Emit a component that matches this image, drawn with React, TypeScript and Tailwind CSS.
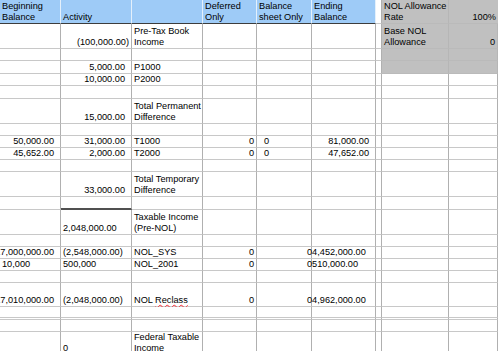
import React from 'react';

type Align = 'l' | 'r' | 'rn' | 'li' | 'ov';
type Cell = { t?: React.ReactNode; a?: Align };
type Row = { h: string; cells: Cell[]; sumTop?: boolean };

const GRID = 'grid grid-cols-[61px_71px_71px_54px_55px_64px_6px_67px_49px]';

const alignClass: Record<Align, string> = {
  l: 'justify-start pl-[2px]',
  li: 'justify-start pl-[7px]',
  r: 'justify-end pr-[6px]',
  rn: 'justify-end pr-[2px]',
  ov: 'justify-start',
};

const two = (a: string, b: string) => (
  <span className="flex flex-col">
    <span>{a}</span>
    <span>{b}</span>
  </span>
);

const E: Cell = {};

const rows: Row[] = [
  {
    h: 'h-[25px]',
    cells: [
      E,
      { t: '(100,000.00)', a: 'rn' },
      { t: two('Pre-Tax Book', 'Income'), a: 'l' },
      E, E, E, E,
      { t: two('Base NOL', 'Allowance'), a: 'l' },
      { t: '0', a: 'rn' },
    ],
  },
  { h: 'h-[12px]', cells: [] },
  { h: 'h-[13px]', cells: [E, { t: '5,000.00', a: 'r' }, { t: 'P1000', a: 'l' }] },
  { h: 'h-[12px]', cells: [E, { t: '10,000.00', a: 'r' }, { t: 'P2000', a: 'l' }] },
  { h: 'h-[13px]', cells: [] },
  {
    h: 'h-[25px]',
    cells: [E, { t: '15,000.00', a: 'r' }, { t: two('Total Permanent', 'Difference'), a: 'l' }],
  },
  { h: 'h-[12px]', cells: [] },
  {
    h: 'h-[12px]',
    cells: [
      { t: '50,000.00', a: 'r' },
      { t: '31,000.00', a: 'r' },
      { t: 'T1000', a: 'l' },
      { t: '0', a: 'rn' },
      { t: '0', a: 'li' },
      { t: '81,000.00', a: 'r' },
    ],
  },
  {
    h: 'h-[12px]',
    cells: [
      { t: '45,652.00', a: 'r' },
      { t: '2,000.00', a: 'r' },
      { t: 'T2000', a: 'l' },
      { t: '0', a: 'rn' },
      { t: '0', a: 'li' },
      { t: '47,652.00', a: 'r' },
    ],
  },
  { h: 'h-[12px]', cells: [] },
  {
    h: 'h-[25px]',
    cells: [E, { t: '33,000.00', a: 'r' }, { t: two('Total Temporary', 'Difference'), a: 'l' }],
  },
  { h: 'h-[13px]', cells: [], sumTop: true },
  {
    h: 'h-[25px]',
    cells: [E, { t: '2,048,000.00', a: 'l' }, { t: two('Taxable Income', '(Pre-NOL)'), a: 'l' }],
  },
  { h: 'h-[12px]', cells: [] },
  {
    h: 'h-[12px]',
    cells: [
      { t: '17,000,000.00', a: 'r' },
      { t: '(2,548,000.00)', a: 'l' },
      { t: 'NOL_SYS', a: 'l' },
      { t: '0', a: 'rn' },
      E,
      { t: <span className="-ml-[5px]">04,452,000.00</span>, a: 'ov' },
    ],
  },
  {
    h: 'h-[12px]',
    cells: [
      { t: '10,000', a: 'l' },
      { t: '500,000', a: 'l' },
      { t: 'NOL_2001', a: 'l' },
      { t: '0', a: 'rn' },
      E,
      { t: <span className="-ml-[5px]">0510,000.00</span>, a: 'ov' },
    ],
  },
  { h: 'h-[12px]', cells: [] },
  {
    h: 'h-[24px]',
    cells: [
      { t: '17,010,000.00', a: 'r' },
      { t: '(2,048,000.00)', a: 'l' },
      {
        t: (
          <span>
            NOL <span className="underline decoration-wavy decoration-red-500 decoration-1">Reclass</span>
          </span>
        ),
        a: 'l',
      },
      { t: '0', a: 'rn' },
      E,
      { t: <span className="-ml-[5px]">04,962,000.00</span>, a: 'ov' },
    ],
  },
  { h: 'h-[11px]', cells: [] },
  { h: 'h-[2px]', cells: [] },
  { h: 'h-[12px]', cells: [] },
  {
    h: 'h-[23px]',
    cells: [E, { t: '0', a: 'l' }, { t: two('Federal Taxable', 'Income'), a: 'l' }],
  },
];

function HeaderRow() {
  const blue = 'bg-[#9ecbf7] border-r border-r-[#e4f0fb] border-b border-b-[#3c3c3c]';
  const base = 'h-[24px] flex items-end pb-0 pl-[2px] whitespace-nowrap';
  return (
    <div className={GRID}>
      <div className={`${base} ${blue}`}>{two('Beginning', 'Balance')}</div>
      <div className={`${base} ${blue}`}>Activity</div>
      <div className={`${base} ${blue}`}></div>
      <div className={`${base} ${blue}`}>{two('Deferred', 'Only')}</div>
      <div className={`${base} ${blue}`}>{two('Balance', 'sheet Only')}</div>
      <div className={`${base} ${blue} border-r-[#b0b0b0]`}>{two('Ending', 'Balance')}</div>
      <div className="h-[24px] bg-white border-r border-r-[#b0b0b0] border-b border-b-[#c8c8c8]"></div>
      <div className={`${base} bg-[#c0c0c0] border-r border-r-[#b6b6b6] border-b border-b-[#bababa]`}>
        {two('NOL Allowance', 'Rate')}
      </div>
      <div className={`${base} bg-[#c0c0c0] justify-end pr-[2px] border-b border-b-[#bababa]`}>100%</div>
    </div>
  );
}

export default function App() {
  return (
    <div
      className="w-[498px] h-[351px] overflow-hidden bg-white text-black text-[9.2px] leading-[11px]"
      style={{ fontFamily: '"Liberation Sans", Arial, sans-serif' }}
    >
      <HeaderRow />
      {rows.map((row, ri) => (
        <div key={ri} className={GRID}>
          {Array.from({ length: 9 }).map((_, ci) => {
            const cell = row.cells[ci] ?? E;
            const grey = ri < 3 && ci >= 7;
            const bg = grey ? 'bg-[#c0c0c0]' : 'bg-white';
            const rb = grey ? 'border-r-[#b6b6b6]' : 'border-r-[#b0b0b0]';
            const bb =
              row.sumTop && ci === 1
                ? 'border-b-2 border-b-[#505050]'
                : grey
                ? 'border-b border-b-[#bababa]'
                : 'border-b border-b-[#c8c8c8]';
            return (
              <div
                key={ci}
                className={`${row.h} ${bg} ${bb} border-r ${rb} flex items-end pb-0 whitespace-nowrap ${
                  cell.a ? alignClass[cell.a] : ''
                }`}
              >
                {cell.t}
              </div>
            );
          })}
        </div>
      ))}
    </div>
  );
}
